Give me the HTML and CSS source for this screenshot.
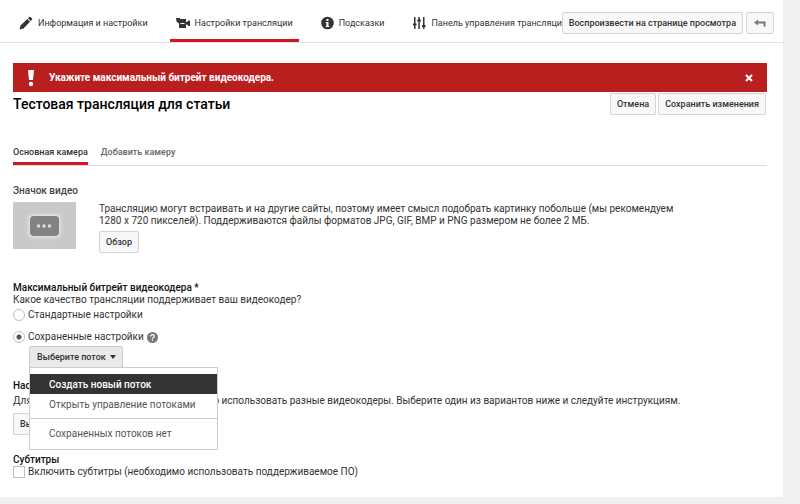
FILE: index.html
```html
<!DOCTYPE html>
<html lang="ru">
<head>
  <meta charset="utf-8">
  <title>Настройки трансляции</title>
  <link rel="stylesheet" href="styles.css">
</head>
<body>
<div class="page">

  <header class="header">
    <nav class="nav">
      <a class="nav-item" href="#info">
        <svg class="icon" width="14" height="14" viewBox="0 0 14 14"><path d="M.5 13.500l1-4L8.300 3l2.700 2.700L4.500 12.500zM9 2.300l1.300-1.300q.6-.5 1.200 0L13 2.500q.6.600 0 1.200L11.700 5z"/></svg>
        Информация и настройки
      </a>
      <a class="nav-item active" href="#stream">
        <svg class="icon" width="14" height="14" viewBox="0 0 14 14"><path d="M0 2h4v1h6v3h1l1.500-1.500H14v5.500h-1.500L11 8.500h-1V12H3V7.500L.5 5.500z"/><path fill="#fff" d="M4.500 7h4v1h-4z"/></svg>
        Настройки трансляции
      </a>
      <a class="nav-item" href="#cards">
        <svg class="icon" width="13" height="14" viewBox="0 0 13 14"><circle cx="6.500" cy="7" r="6.300"/><path fill="#fff" d="M5.500 3h2v2h-2zM4.700 6h2.800v4h.8v1H4.700v-1h.8V7h-.8z"/></svg>
        Подсказки
      </a>
      <a class="nav-item" href="#control">
        <svg class="icon" width="14" height="14" viewBox="0 0 14 14"><path d="M2 1h1.500v12H2zM6.300 1h1.500v12H6.300zM11 1h1.500v12H11zM1 7.500h3.500V9.500H1zM5.300 3.500h3.500v2H5.300zM10 9h3.500v2H10z"/></svg>
        Панель управления трансляциями
      </a>
    </nav>
    <div class="header-buttons">
      <button class="button" type="button">Воспроизвести на странице просмотра</button>
      <button class="button button-back" type="button" aria-label="Назад">
        <svg width="12" height="10" viewBox="0 0 12 10"><path fill="#777" d="M0 4.500L4 1.500V3.500h7.500V8.500h-2v-3H4v2z"/></svg>
      </button>
    </div>
  </header>

  <main class="content">
    <div class="alert" role="alert">
      <svg class="alert-icon" width="8" height="18" viewBox="0 0 8 18"><path fill="#fff" d="M1 1h6l-1 10H2z"/><circle cx="4" cy="15" r="2.200" fill="#fff"/></svg>
      <span class="alert-text">Укажите максимальный битрейт видеокодера.</span>
      <button class="alert-close" type="button" aria-label="Закрыть">
        <svg width="8" height="8" viewBox="0 0 8 8"><path stroke="#fff" stroke-width="2" d="M1 1l6 6M7 1L1 7"/></svg>
      </button>
    </div>

    <div class="title-row">
      <h1>Тестовая трансляция для статьи</h1>
      <div class="title-buttons">
        <button class="button" type="button">Отмена</button>
        <button class="button" type="button">Сохранить изменения</button>
      </div>
    </div>

    <nav class="tabs">
      <a class="tab active" href="#main-camera">Основная камера</a>
      <a class="tab" href="#add-camera">Добавить камеру</a>
    </nav>

    <section class="thumbnail">
      <h2>Значок видео</h2>
      <div class="thumbnail-row">
        <svg class="thumbnail-image" width="63" height="47" viewBox="0 0 63 47">
          <defs>
            <filter id="glow" x="-30%" y="-30%" width="160%" height="160%"><feGaussianBlur stdDeviation="2"/></filter>
          </defs>
          <path fill="#c9c9c9" d="M0 0h63v47H0z"/>
          <rect x="16" y="13" width="31" height="22" rx="4" fill="#eee" filter="url(#glow)"/>
          <rect x="17" y="14" width="29" height="20" rx="4" fill="#828282"/>
          <g fill="#ddd"><circle cx="25.500" cy="24" r="1.700"/><circle cx="31" cy="24" r="1.700"/><circle cx="36.500" cy="24" r="1.700"/></g>
        </svg>
        <div class="thumbnail-info">
          <p>Трансляцию могут встраивать и на другие сайты, поэтому имеет смысл подобрать картинку побольше (мы рекомендуем 1280 x 720 пикселей). Поддерживаются файлы форматов JPG, GIF, BMP и PNG размером не более 2 МБ.</p>
          <button class="button" type="button">Обзор</button>
        </div>
      </div>
    </section>

    <section class="bitrate">
      <h2 class="dark">Максимальный битрейт видеокодера *</h2>
      <p>Какое качество трансляции поддерживает ваш видеокодер?</p>
      <div class="options">
        <div class="option">
          <input class="radio" type="radio" name="ingestion" id="basic">
          <label for="basic">Стандартные настройки</label>
        </div>
        <div class="option">
          <input class="radio" type="radio" name="ingestion" id="saved" checked>
          <label for="saved">Сохраненные настройки</label>
          <svg class="help" width="11" height="11" viewBox="0 0 11 11"><circle cx="5.500" cy="5.500" r="5.500" fill="#777"/><path fill="none" stroke="#fff" stroke-width="1.300" d="M3.700 4.400q0-1.700 1.800-1.700t1.800 1.500q0 .8-.9 1.300t-.9 1.300"/><path fill="#fff" d="M4.800 7.600h1.400v1.300H4.800z"/></svg>
        </div>
      </div>
      <div class="dropdown">
        <button class="button dropdown-button" type="button" aria-haspopup="true" aria-expanded="true">Выберите поток<span class="caret"></span></button>
        <ul class="menu">
          <li><button class="menu-item selected" type="button">Создать новый поток</button></li>
          <li><button class="menu-item" type="button">Открыть управление потоками</button></li>
          <li class="menu-empty">Сохраненных потоков нет</li>
        </ul>
      </div>
    </section>

    <section class="encoder">
      <h2 class="dark">Настройка видеокодера</h2>
      <p>Для прямых трансляций на YouTube можно использовать разные видеокодеры. Выберите один из вариантов ниже и следуйте инструкциям.</p>
      <button class="button" type="button">Выберите видеокодер</button>
    </section>

    <section class="captions">
      <h2 class="dark">Субтитры</h2>
      <div class="option">
        <input class="checkbox" type="checkbox" id="captions">
        <label for="captions">Включить субтитры (необходимо использовать поддерживаемое ПО)</label>
      </div>
    </section>
  </main>

</div>
</body>
</html>
```

FILE: styles.css
```css
body { margin: 0; background: #f0f0f0; color: #333; font: 10px/12px Roboto, Arial, sans-serif; }
h1, h2, p, ul { margin: 0; padding: 0; }
h2 { font-size: 10px; line-height: 12px; font-weight: 500; color: #444; }
h2.dark { color: #111; }
a { text-decoration: none; }
button { font-family: inherit; cursor: pointer; }

.page { margin-right: 17px; background: #fff; box-shadow: 0 1px 1px #ddd; }

.button { box-sizing: border-box; height: 22px; padding: 0 6px; border: 1px solid #d3d3d3;
          border-radius: 2px; background: #f8f8f8; color: #333; font-size: 9px; font-weight: 500;
          line-height: 12px; white-space: nowrap; }

/* header */
.header { display: flex; justify-content: space-between; height: 42px; border-bottom: 1px solid #e2e2e2; }
.nav { display: flex; flex: 1; gap: 16px; min-width: 0; padding-left: 13px; overflow: hidden; }
.nav-item { display: flex; flex: none; align-items: center; gap: 5px; padding: 6px 6px 0;
            border-bottom: 3px solid transparent; color: #333; font-size: 9px; white-space: nowrap; }
.nav-item.active { border-bottom-color: #cc181e; }
.icon { fill: #333; }
.header-buttons { display: flex; flex: none; align-items: center; gap: 3px; padding: 4px 9px 0 0; }
.button-back { display: flex; align-items: center; justify-content: center; width: 28px; }

.content { padding: 20px 16px 19px 13px; }

/* alert */
.alert { display: flex; align-items: center; height: 29px; padding: 0 14px; background: #b91f1f; color: #fff; }
.alert-text { flex: 1; padding-left: 14px; font-weight: 700; }
.alert-close { display: flex; padding: 0; border: 0; background: none; }

/* title */
.title-row { display: flex; justify-content: space-between; align-items: center; height: 24px; }
h1 { color: #000; font-size: 14px; line-height: 18px; font-weight: 500; }
.title-buttons { display: flex; gap: 2px; padding-right: 1px; }

/* tabs */
.tabs { display: flex; gap: 13px; margin-top: 30px; border-bottom: 1px solid #ddd; }
.tab { padding-bottom: 4px; border-bottom: 3px solid transparent; color: #666; font-size: 9px; font-weight: 500; }
.tab.active { border-bottom-color: #cc181e; color: #333; }

/* thumbnail */
.thumbnail { margin-top: 19px; }
.thumbnail-row { display: flex; gap: 23px; margin-top: 5px; }
.thumbnail-image { flex: none; }
.thumbnail-info { max-width: 590px; padding-top: 1px; }
.thumbnail-info .button { margin-top: 4px; }

/* options */
.bitrate { margin-top: 29px; }
.option { display: flex; align-items: center; gap: 3px; }
.options { display: grid; gap: 4px; }
.options .option { height: 18px; }
.radio, .checkbox { box-sizing: border-box; width: 12px; height: 12px; margin: 0; appearance: none;
                    border: 1px solid #c0c0c0; background: #fff; }
.radio { border-radius: 50%; }
.radio:checked { background: radial-gradient(circle, #555 2px, #fff 3px); }

/* dropdown */
.dropdown { position: relative; height: 22px; margin-left: 16px; }
.dropdown-button { padding: 0 6px 0 7px; border-color: #ccc; background: #e9e9e9; }
.caret { display: inline-block; margin-left: 4px; border: 3px solid transparent; border-top: 4px solid #333; border-bottom: 0; vertical-align: 1px; }
.menu { position: absolute; top: 21px; left: 0; z-index: 1; box-sizing: border-box; width: 189px;
        padding: 6px 0 0; border: 1px solid #ccc; background: #fff; list-style: none; }
.menu-item { display: block; width: 100%; height: 20px; padding: 0 19px; border: 0; background: none;
             color: #555; font-size: 10px; text-align: left; }
.menu-item.selected { background: #333; color: #fff; font-weight: 500; }
.menu-empty { margin-top: 4px; padding: 9px 19px; border-top: 1px solid #ccc; color: #555; }

.encoder { margin-top: 12px; }
.encoder p { margin: 3px 0 6px; }
.captions { margin-top: 19px; }
```
